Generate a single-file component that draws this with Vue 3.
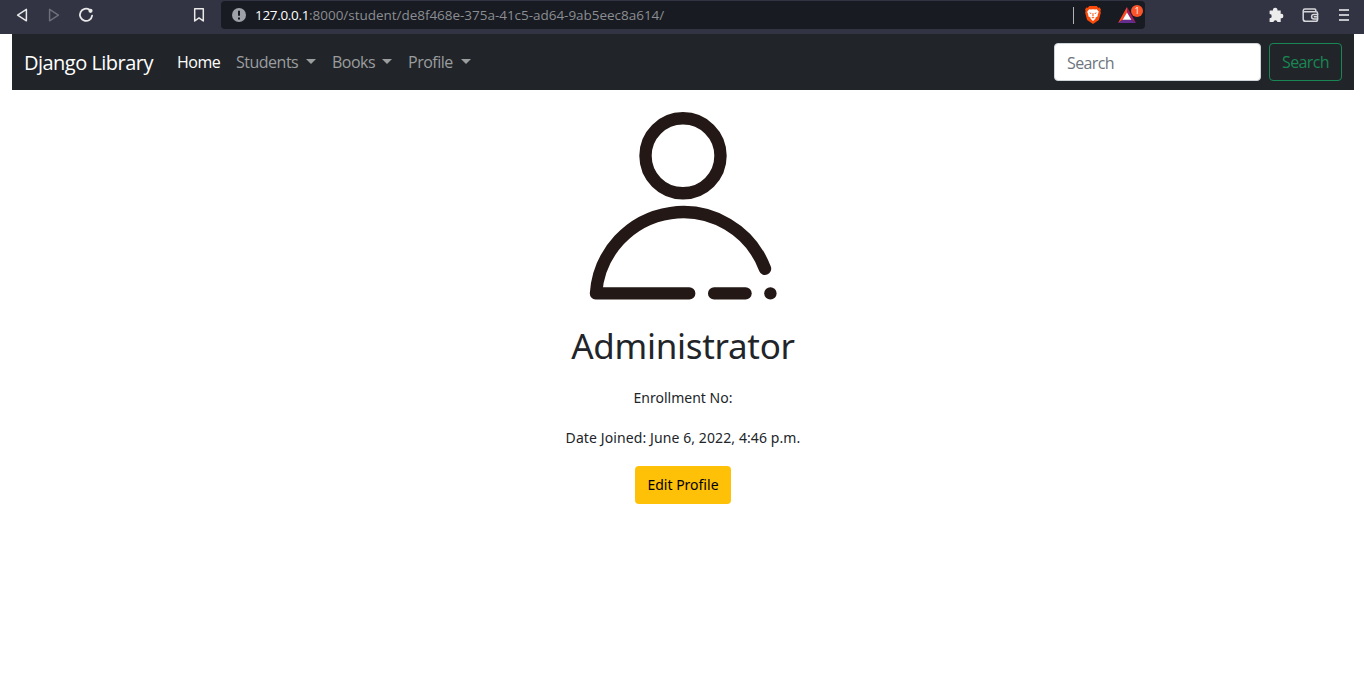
<script setup>
const menus = ['Students', 'Books', 'Profile']
</script>

<template>
  <div class="page">
    <header class="chrome">
      <svg class="tool back" viewBox="0 0 16 16"><path d="M12.4 2.4v11.4L3.6 8.1z" /></svg>
      <svg class="tool forward" viewBox="0 0 16 16"><path d="M3.6 2.4v11.4l8.8-5.7z" /></svg>
      <svg class="tool reload" viewBox="0 0 16 16"><path d="M11.6 2.8A6.1 6.1 0 1 0 14.1 8.6" /><circle cx="12.5" cy="3.8" r="2.1" /></svg>
      <svg class="tool mark" viewBox="0 0 16 16"><path d="M3.7 1.8h8.6v12.2L8 10.9 3.7 14z" /></svg>
      <div class="address">
        <svg class="info" viewBox="0 0 14 14"><circle cx="7" cy="7" r="7" /><path d="M7 2.8v5M7 9.4v2" /></svg>
        <span class="host">127.0.0.1</span><span class="path">:8000/student/de8f468e-375a-41c5-ad64-9ab5eec8a614/</span>
        <i class="divider"></i>
        <svg class="lion" viewBox="0 0 16 18"><path fill="#fb4b0a" d="M4.3 0h7.4l1.5 1.7 1.5-.1 1.2 2-.5 1.5.4 1.6-1.9 7.2L8 18l-5.9-4.1L.2 6.7l.4-1.6-.5-1.5 1.2-2 1.5.1z" /><path fill="#fff" d="M4.2 3.2 6 3.6l2-.4 2 .4 1.8-.4 2 2.6-1.2 3.1.1 1.3-2.4 1.5.2 1.1L8 15l-2.5-2.2.2-1.1-2.4-1.5.1-1.3-1.2-3.1z" /><path fill="#fb4b0a" d="m3.9 6.4 2.7.7-.7.8zm8.2 0-2.7.7.7.8zM7.6 7h.8l.2 3-.6.6-.6-.6zM6.4 11.6l1.6-.5 1.6.5-1.6.8z" /></svg>
        <div class="rewards">
          <svg viewBox="0 0 18 16"><path fill="#ff4724" d="M9 0 0 16l5.3-3.4L9 6z" /><path fill="#9e1f63" d="m9 0 9 16-5.3-3.4L9 6z" /><path fill="#662d91" d="M0 16h18l-5.3-3.4H5.3z" /><path fill="#fff" d="m9 5.4 4.3 7.4H4.7z" /></svg>
          <b>1</b>
        </div>
      </div>
      <svg class="tool puzzle" viewBox="0 0 16 16"><path d="M2 3.6h3a2.3 2.3 0 1 1 4.4 0h3.3v3.3a2.2 2.2 0 1 1 0 4.3V15H9.5a2.1 2.1 0 0 0-4.1 0H1.6v-3.7a2.1 2.1 0 0 0 0-4.2V4z" /></svg>
      <svg class="tool wallet" viewBox="0 0 17 16"><path d="M13.8 4.8V3.3a1.2 1.2 0 0 0-1.2-1.2H3a1.8 1.8 0 0 0-1.8 1.7v8.3a2.3 2.3 0 0 0 2.3 2.2h10.3a1.8 1.8 0 0 0 1.8-1.8V6.4a1.6 1.6 0 0 0-1.6-1.6H2.5M15.8 7.5h-4a2.2 2.2 0 0 0 0 4.4h4M12.3 9.7h2" /></svg>
      <svg class="tool menu" viewBox="0 0 10 12"><path d="M0 1h10M0 6h10M0 11h10" /></svg>
    </header>

    <nav class="navbar">
      <a class="brand">Django Library</a>
      <a class="link active">Home</a>
      <a v-for="m in menus" :key="m" class="link" :class="m.toLowerCase()"><span>{{ m }}</span><i class="caret"></i></a>
      <form class="search">
        <input type="text" placeholder="Search" />
        <button type="button">Search</button>
      </form>
    </nav>

    <main class="profile-card">
      <svg class="avatar" viewBox="0 0 190 190">
        <circle cx="95" cy="45.8" r="37.5" />
        <path d="M177 158.8A87.4 87.4 0 0 0 8 183.4H101.2" />
        <path d="M126.2 183.4h31.3" />
        <path d="M182.4 183.4h.01" />
      </svg>
      <h1>Administrator</h1>
      <p class="enroll">Enrollment No:</p>
      <p class="joined">Date Joined: June 6, 2022, 4:46 p.m.</p>
      <a class="edit">Edit Profile</a>
    </main>
  </div>
</template>

<style>
body { margin: 0; background: #fff; }
</style>

<style scoped>
.page { width: 1364px; height: 695px; overflow: hidden; font-family: "Open Sans", sans-serif; }
.page * { box-sizing: border-box; }
.chrome { height: 34px; background: #323443; display: flex; align-items: flex-start; }
.tool { width: 16px; height: 16px; margin-top: 7px; flex: none; fill: none; stroke: #e9e9ea; stroke-width: 1.5; stroke-linejoin: round; stroke-linecap: round; }
.back { margin-left: 14px; }
.forward { margin-left: 16px; stroke: #6d6f7a; }
.reload { margin-left: 16px; stroke-width: 1.8; }
.reload circle { fill: #e9e9ea; stroke: none; }
.mark { margin-left: 97px; }
.address { margin: 1px 0 0 14px; width: 924px; height: 28px; border-radius: 4px; background: #181b22; display: flex; align-items: center; padding-left: 11px; font-size: 13.5px; color: #8b8d91; white-space: nowrap; }
.address span { padding-bottom: 1px; }
.info { width: 14px; height: 14px; margin-right: 9px; fill: #9ea1a8; stroke: #181b22; stroke-width: 2; }
.info circle { stroke: none; }
.host { color: #fff; letter-spacing: -0.32px; }
.path { letter-spacing: -0.03px; }
.divider { width: 1px; height: 17px; background: #b0b2b6; margin-left: auto; }
.lion { width: 16px; height: 18px; margin-left: 11px; }
.rewards { position: relative; width: 18px; height: 16px; margin: 0 9px 0 17px; }
.rewards svg { display: block; width: 18px; height: 16px; }
.rewards b { position: absolute; left: 13px; top: -2px; width: 12px; height: 12px; border-radius: 6px; background: #fb542b; color: #fff; font: 9px/12px "Open Sans", sans-serif; text-align: center; }
.puzzle { margin-left: 123px; fill: #ececed; stroke: none; }
.wallet { width: 17px; margin-left: 18px; stroke: #d6d7da; }
.menu { width: 10px; height: 12px; margin: 9px 0 0 20px; stroke: #c3c4c9; stroke-linecap: butt; stroke-width: 2; }
.navbar { margin: 0 10px 0 12px; height: 56px; background: #212529; padding: 0 12px; display: flex; align-items: center; font-size: 16px; letter-spacing: -0.5px; color: #9b9d9f; white-space: nowrap; }
.brand { color: #fff; font-size: 20px; width: 153px; letter-spacing: -0.52px; }
.link { display: flex; align-items: center; justify-content: space-between; margin-right: 16px; }
.active { color: #fff; width: 43px; }
.students { width: 80px; }
.books { width: 60px; }
.profile { width: 63px; }
.caret { border: 5px solid transparent; border-top-color: currentColor; border-bottom: 0; margin-bottom: 2px; }
.search { margin-left: auto; display: flex; gap: 8px; }
.search input { width: 207px; height: 38px; border: 1px solid #ced4da; border-radius: 4px; padding: 1px 12px 0; font: 16px "Open Sans", sans-serif; letter-spacing: -0.6px; }
.search input::placeholder { color: #6c757d; opacity: 1; }
.search button { width: 73px; height: 38px; padding: 0; border: 1px solid #198754; border-radius: 4px; background: none; color: #198754; font: 16px "Open Sans", sans-serif; letter-spacing: -0.6px; }
.profile-card { display: flex; flex-direction: column; align-items: center; padding-left: 2px; color: #212529; font-family: "Noto Sans", sans-serif; font-size: 14px; }
.avatar { width: 190px; height: 190px; margin-top: 20px; fill: none; stroke: #231815; stroke-width: 12.4; stroke-linecap: round; stroke-linejoin: round; }
h1 { margin: 24px 0 1px; font-size: 35px; line-height: 44px; font-weight: 400; letter-spacing: -0.3px; }
p { margin: 18px 0 0; line-height: 22px; }
.joined { letter-spacing: 0.1px; }
.edit { margin-top: 17px; width: 96px; height: 38px; border-radius: 4px; background: #ffc107; color: #000; text-align: center; line-height: 38px; }
</style>
